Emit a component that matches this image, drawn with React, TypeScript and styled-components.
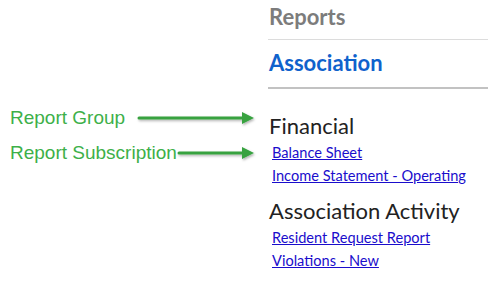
import styled, { createGlobalStyle } from "styled-components";

const GlobalStyle = createGlobalStyle`
    html, body {
        margin: 0;
        padding: 0;
        background: #ffffff;
    }
`;

const Page = styled.div`
    width: 488px;
    height: 288px;
    display: flex;
    overflow: hidden;
    background: #ffffff;
`;

const Legend = styled.div`
    width: 268px;
    display: flex;
    flex-direction: column;
    padding: 106px 0 0 10px;
    box-sizing: border-box;
`;

const LegendRow = styled.div<{ $gap: number }>`
    display: flex;
    align-items: center;
    height: 24px;
    margin-bottom: 11px;
    gap: ${(p) => p.$gap}px;
`;

const LegendLabel = styled.span`
    font-family: "Liberation Sans", Arial, sans-serif;
    font-size: 19px;
    color: #3db049;
    white-space: nowrap;
`;

const Panel = styled.div`
    flex: 1;
    display: flex;
    flex-direction: column;
    font-family: Lato, "Open Sans", sans-serif;
`;

const Title = styled.div`
    height: 39px;
    border-bottom: 1px solid #dcdcdc;
    padding-left: 1px;
    font-size: 22px;
    font-weight: 700;
    color: #7c7c7c;
    line-height: 33px;
`;

const Context = styled.div`
    height: 47px;
    border-bottom: 2px solid #c2c2c2;
    padding-left: 1px;
    font-size: 22px;
    font-weight: 700;
    color: #0f62cc;
    line-height: 45px;
`;

const Group = styled.div<{ $top: number }>`
    display: flex;
    flex-direction: column;
    margin-top: ${(p) => p.$top}px;
    padding-left: 1px;
`;

const GroupName = styled.div`
    font-size: 22px;
    color: #222222;
    line-height: 26px;
    margin-bottom: 2px;
`;

const Subscription = styled.a`
    margin-left: 3px;
    font-size: 14.6px;
    line-height: 23px;
    color: #1a0dcc;
    text-decoration: underline;
    cursor: pointer;
    align-self: flex-start;
`;

function LineArrow({ width }: { width: number }) {
    return (
        <svg width={width} height="16" viewBox={`0 0 ${width} 16`} style={{ overflow: "visible" }}>
            <defs>
                <filter id={`sh${width}`} x="-10%" y="-50%" width="120%" height="200%">
                    <feDropShadow dx="1" dy="1.5" stdDeviation="0.8" floodColor="#000" floodOpacity="0.3" />
                </filter>
            </defs>
            <g filter={`url(#sh${width})`}>
                <line x1="1" y1="8" x2={width - 10} y2="8" stroke="#37a23f" strokeWidth="3" strokeLinecap="round" />
                <polygon points={`${width - 12},2 ${width},8 ${width - 12},14`} fill="#37a23f" />
            </g>
        </svg>
    );
}

const groups = [
    { name: "Financial", top: 24, links: ["Balance Sheet", "Income Statement - Operating"] },
    { name: "Association Activity", top: 11, links: ["Resident Request Report", "Violations - New"] },
];

export default function App() {
    return (
        <>
            <GlobalStyle />
            <Page>
                <Legend>
                    <LegendRow $gap={13}>
                        <LegendLabel>Report Group</LegendLabel>
                        <LineArrow width={116} />
                    </LegendRow>
                    <LegendRow $gap={1}>
                        <LegendLabel>Report Subscription</LegendLabel>
                        <LineArrow width={76} />
                    </LegendRow>
                </Legend>
                <Panel>
                    <Title>Reports</Title>
                    <Context>Association</Context>
                    {groups.map((g) => (
                        <Group key={g.name} $top={g.top}>
                            <GroupName>{g.name}</GroupName>
                            {g.links.map((l) => (
                                <Subscription key={l}>{l}</Subscription>
                            ))}
                        </Group>
                    ))}
                </Panel>
            </Page>
        </>
    );
}
